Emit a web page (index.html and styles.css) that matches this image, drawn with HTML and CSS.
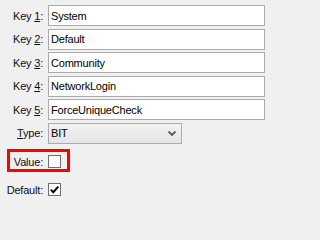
FILE: index.html
```html
<!DOCTYPE html>
<html>
<head>
<meta charset="utf-8">
<link rel="stylesheet" href="styles.css">
</head>
<body>
<div class="form">
  <div class="row"><label class="lbl">Key <u>1</u>:</label><input class="field" type="text" value="System"></div>
  <div class="row"><label class="lbl">Key <u>2</u>:</label><input class="field" type="text" value="Default"></div>
  <div class="row"><label class="lbl">Key <u>3</u>:</label><input class="field" type="text" value="Community"></div>
  <div class="row"><label class="lbl">Key <u>4</u>:</label><input class="field" type="text" value="NetworkLogin"></div>
  <div class="row"><label class="lbl">Key <u>5</u>:</label><input class="field" type="text" value="ForceUniqueCheck"></div>
  <div class="row"><label class="lbl"><u>T</u>ype:</label>
    <div class="select"><span class="sel-text">BIT</span>
      <svg class="chev" width="8" height="5" viewBox="0 0 8 5"><path d="M0.5 0.5 L4 4 L7.5 0.5" fill="none" stroke="#555" stroke-width="1.8"/></svg>
    </div>
  </div>
  <div class="row check-row value-row">
    <span class="highlight"></span>
    <label class="lbl">Value:</label><span class="cbox"></span>
  </div>
  <div class="row check-row default-row">
    <label class="lbl">Default:</label>
    <span class="cbox"><svg width="11" height="11" viewBox="0 0 11 11"><path d="M1.8 5.6 L4.3 8.2 L9.3 2.6" fill="none" stroke="#000" stroke-width="2"/></svg></span>
  </div>
</div>
</body>
</html>
```
FILE: styles.css
```css
html, body {
  margin: 0;
  padding: 0;
  background: #f0f0f0;
}
body {
  width: 270px;
  height: 201px;
  overflow: hidden;
  font-family: "Liberation Sans", Arial, sans-serif;
  font-size: 11px;
  letter-spacing: -0.2px;
  color: #000;
}
.form {
  display: flex;
  flex-direction: column;
  gap: 2.5px;
  padding: 5px 5px 0 0;
}
.row {
  display: grid;
  grid-template-columns: 43px 1fr;
  column-gap: 5px;
  align-items: center;
  height: 21px;
  position: relative;
}
.lbl {
  text-align: right;
  white-space: nowrap;
  color: #111;
}
.field {
  box-sizing: border-box;
  height: 21px;
  width: 100%;
  margin: 0;
  border: 1px solid #ababab;
  background: #fff;
  padding: 0 2px;
  font: inherit;
  letter-spacing: inherit;
  color: #000;
  outline: none;
}
.select {
  box-sizing: border-box;
  width: 134px;
  height: 21px;
  border: 1px solid #acacac;
  background: linear-gradient(#f2f2f2, #e5e5e5);
  display: flex;
  align-items: center;
  justify-content: space-between;
  padding: 0 5px 0 2px;
}
.chev {
  display: block;
  margin-top: 1px;
}
.check-row {
  height: 13px;
}
.value-row {
  margin-top: 9px;
}
.default-row {
  margin-top: 12.5px;
}
.cbox {
  box-sizing: border-box;
  width: 13px;
  height: 13px;
  border: 1px solid #707070;
  background: #fff;
  display: flex;
  align-items: center;
  justify-content: center;
}
.cbox svg {
  display: block;
}
.highlight {
  position: absolute;
  left: 7px;
  top: -6px;
  width: 63px;
  height: 23px;
  box-sizing: border-box;
  border: 3px solid #ff0000;
}
```
